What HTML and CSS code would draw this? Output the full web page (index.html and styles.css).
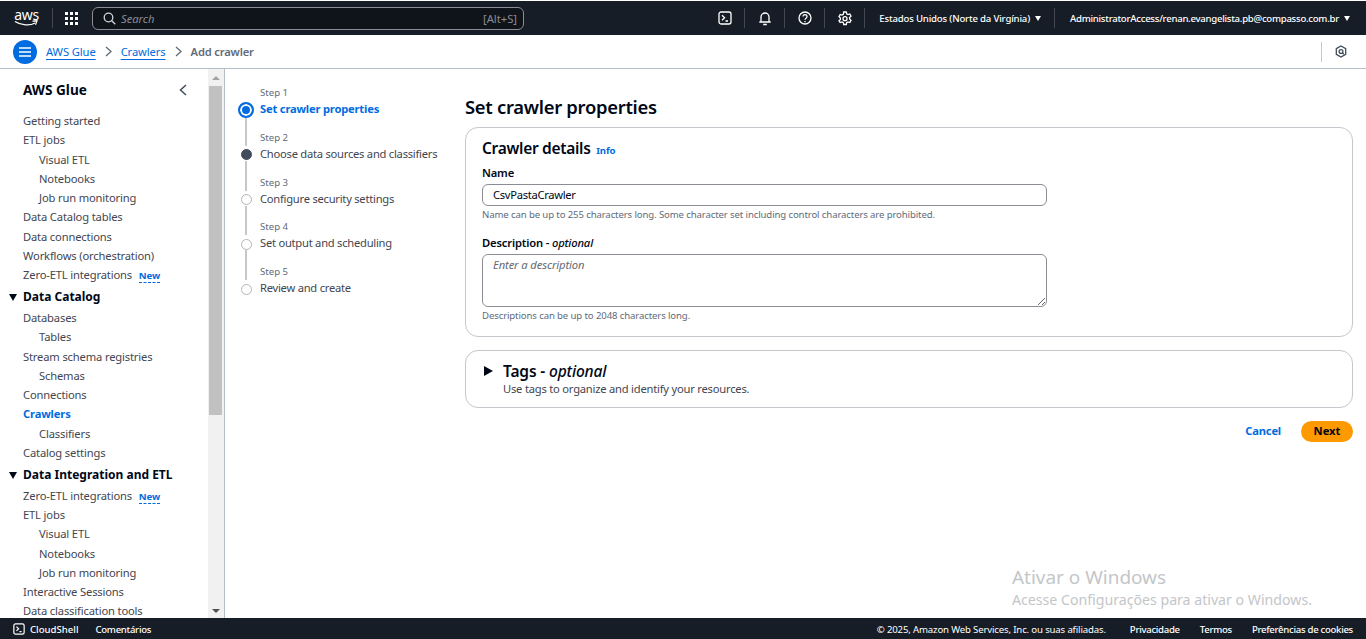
FILE: index.html
```html
<!DOCTYPE html>
<html lang="en">
<head>
	<title>Add crawler | AWS Glue</title>
	<meta charset="utf-8">
	<link rel="stylesheet" href="styles.css">
</head>
<body>
	<header class="topbar">
		<div class="logo">
			<span class="logo-text">aws</span>
			<svg class="logo-smile" width="25" height="7" viewBox="0 0 25 7"><path d="M1 1.500c6 4 15 4.500 20 1.500" fill="none" stroke="#fff" stroke-width="1.300"/><path d="M18.500 1.200l4.500-.4-1.500 4" fill="none" stroke="#fff" stroke-width="1.200"/></svg>
		</div>
		<span class="divider"></span>
		<svg class="apps" width="13" height="13" viewBox="0 0 13 13" fill="#fff"><rect width="3" height="3"/><rect x="5" width="3" height="3"/><rect x="10" width="3" height="3"/><rect y="5" width="3" height="3"/><rect x="5" y="5" width="3" height="3"/><rect x="10" y="5" width="3" height="3"/><rect y="10" width="3" height="3"/><rect x="5" y="10" width="3" height="3"/><rect x="10" y="10" width="3" height="3"/></svg>
		<div class="search">
			<svg width="13" height="13" viewBox="0 0 13 13" fill="none" stroke="#d1d5db" stroke-width="1.300"><circle cx="5.500" cy="5.500" r="4.300"/><path d="M8.700 8.700l3.600 3.600"/></svg>
			<span class="search-text">Search</span>
			<span class="search-key">[Alt+S]</span>
		</div>
		<div class="top-actions">
			<span class="top-icon">
				<svg width="14" height="14" viewBox="0 0 14 14" fill="none" stroke="#fff" stroke-width="1.300"><rect x="1" y="1" width="12" height="12" rx="2"/><path d="M4 4.200l2.600 2.500-2.600 2.500M7.500 10h2.500"/></svg>
			</span>
			<span class="divider"></span>
			<span class="top-icon">
				<svg width="14" height="15" viewBox="0 0 14 15" fill="none" stroke="#fff" stroke-width="1.300"><path d="M3 10.500V6a4 4 0 0 1 8 0v4.500M1.300 11h11.400M5.200 13.500h3.600"/></svg>
			</span>
			<span class="divider"></span>
			<span class="top-icon">
				<svg width="14" height="14" viewBox="0 0 14 14" fill="none" stroke="#fff" stroke-width="1.300"><circle cx="7" cy="7" r="6"/><path d="M5 5.500a2 2 0 1 1 3 1.800c-.7.400-1 .8-1 1.500"/><path d="M7 10v1.200"/></svg>
			</span>
			<span class="divider"></span>
			<span class="top-icon">
				<svg width="14" height="15" viewBox="0 0 14 15" fill="none" stroke="#fff" stroke-width="1.300"><path d="M5.700 1h2.600l.4 1.900 1.300.7 1.800-.6 1.200 2.200-1.400 1.300v1.500l1.400 1.300-1.200 2.200-1.800-.6-1.300.7-.4 1.900H5.700l-.4-1.900-1.300-.7-1.800.6L1 9.800l1.400-1.300V7L1 5.700 2.200 3.500l1.800.6 1.300-.7z"/><circle cx="7" cy="7.700" r="2"/></svg>
			</span>
			<span class="divider"></span>
			<span class="top-menu region">Estados Unidos (Norte da Virgínia)<i class="caret"></i></span>
			<span class="divider"></span>
			<span class="top-menu account">AdministratorAccess/renan.evangelista.pb@compasso.com.br<i class="caret"></i></span>
		</div>
	</header>

	<nav class="crumbs">
		<span class="menu-btn">
			<svg width="12" height="10" viewBox="0 0 12 10" fill="none" stroke="#fff" stroke-width="1.600"><path d="M0 1h12M0 5h12M0 9h12"/></svg>
		</span>
		<a class="crumb">AWS Glue</a>
		<svg class="chev" width="8" height="11" viewBox="0 0 8 11" fill="none" stroke="#5f6b7a" stroke-width="1.300"><path d="M1 1l5 4.500-5 4.500"/></svg>
		<a class="crumb">Crawlers</a>
		<svg class="chev" width="8" height="11" viewBox="0 0 8 11" fill="none" stroke="#5f6b7a" stroke-width="1.300"><path d="M1 1l5 4.500-5 4.500"/></svg>
		<span class="crumb-current">Add crawler</span>
		<div class="crumb-tools">
			<svg width="12" height="13" viewBox="0 0 12 13" fill="none" stroke="#414d5c" stroke-width="1.300"><path d="M6 1l4.700 2.700v5.600L6 12 1.300 9.300V3.700z"/><circle cx="6" cy="6.500" r="1.900"/><path d="M7.400 7.800l1.400 1.400"/></svg>
		</div>
	</nav>

	<div class="layout">
		<aside class="sidebar">
			<div class="side-head">
				<span class="side-title">AWS Glue</span>
				<svg width="8" height="12" viewBox="0 0 8 12" fill="none" stroke="#414d5c" stroke-width="1.500"><path d="M7 1L1.500 6 7 11"/></svg>
			</div>
			<ul class="side-list">
				<li>Getting started</li>
				<li>ETL jobs</li>
				<li class="sub">Visual ETL</li>
				<li class="sub">Notebooks</li>
				<li class="sub">Job run monitoring</li>
				<li>Data Catalog tables</li>
				<li>Data connections</li>
				<li>Workflows (orchestration)</li>
				<li>Zero-ETL integrations <span class="new">New</span></li>
				<li class="section"><i class="section-caret"></i>Data Catalog</li>
				<li>Databases</li>
				<li class="sub">Tables</li>
				<li>Stream schema registries</li>
				<li class="sub">Schemas</li>
				<li>Connections</li>
				<li class="active">Crawlers</li>
				<li class="sub">Classifiers</li>
				<li>Catalog settings</li>
				<li class="section"><i class="section-caret"></i>Data Integration and ETL</li>
				<li>Zero-ETL integrations <span class="new">New</span></li>
				<li>ETL jobs</li>
				<li class="sub">Visual ETL</li>
				<li class="sub">Notebooks</li>
				<li class="sub">Job run monitoring</li>
				<li>Interactive Sessions</li>
				<li>Data classification tools</li>
			</ul>
		</aside>
		<div class="scrollbar">
			<i class="arrow-up"></i>
			<div class="thumb"></div>
			<i class="arrow-down"></i>
		</div>

		<main class="main">
			<ol class="steps">
				<li class="step current">
					<span class="step-line none"></span><span class="step-num">Step 1</span>
					<span class="dot"></span><span class="step-name">Set crawler properties</span>
				</li>
				<li class="step next">
					<span class="step-line"></span><span class="step-num">Step 2</span>
					<span class="dot"></span><span class="step-name">Choose data sources and classifiers</span>
				</li>
				<li class="step">
					<span class="step-line"></span><span class="step-num">Step 3</span>
					<span class="dot"></span><span class="step-name">Configure security settings</span>
				</li>
				<li class="step">
					<span class="step-line"></span><span class="step-num">Step 4</span>
					<span class="dot"></span><span class="step-name">Set output and scheduling</span>
				</li>
				<li class="step">
					<span class="step-line"></span><span class="step-num">Step 5</span>
					<span class="dot"></span><span class="step-name">Review and create</span>
				</li>
			</ol>

			<section class="form">
				<h1>Set crawler properties</h1>
				<div class="panel details">
					<h2>Crawler details <a class="info">Info</a></h2>
					<label class="field-label">Name</label>
					<input class="input" type="text" value="CsvPastaCrawler">
					<p class="hint">Name can be up to 255 characters long. Some character set including control characters are prohibited.</p>
					<label class="field-label second">Description - <em>optional</em></label>
					<textarea class="input area" placeholder="Enter a description"></textarea>
					<p class="hint">Descriptions can be up to 2048 characters long.</p>
				</div>
				<div class="panel tags">
					<i class="tags-caret"></i>
					<div>
						<h2>Tags - <em>optional</em></h2>
						<p class="tags-sub">Use tags to organize and identify your resources.</p>
					</div>
				</div>
				<div class="actions">
					<a class="cancel">Cancel</a>
					<a class="next-btn">Next</a>
				</div>
			</section>
		</main>
	</div>

	<footer class="footer">
		<svg width="12" height="12" viewBox="0 0 14 14" fill="none" stroke="#fff" stroke-width="1.400"><rect x="1" y="1" width="12" height="12" rx="2"/><path d="M4 4.200l2.600 2.500-2.600 2.500M7.500 10h2.500"/></svg>
		<span class="cloudshell">CloudShell</span>
		<span class="feedback">Comentários</span>
		<div class="footer-right">
			<span class="copy">© 2025, Amazon Web Services, Inc. ou suas afiliadas.</span>
			<span class="foot-link first">Privacidade</span>
			<span class="foot-link">Termos</span>
			<span class="foot-link">Preferências de cookies</span>
		</div>
	</footer>

	<div class="watermark">
		<div class="wm-title">Ativar o Windows</div>
		<div class="wm-sub">Acesse Configurações para ativar o Windows.</div>
	</div>
</body>
</html>
```

FILE: styles.css
```css
* {
	box-sizing: border-box;
}

html, body {
	height: 100%;
}

body {
	margin: 0;
	overflow: hidden;
	display: flex;
	flex-direction: column;
	font-family: "Noto Sans", "Open Sans", sans-serif;
	font-size: 11.2px;
	color: #000716;
	background: #fff;
}

ul, ol {
	list-style: none;
	margin: 0;
	padding: 0;
}

/* top bar */
.topbar {
	height: 34px;
	margin-top: 1px;
	flex: none;
	display: flex;
	align-items: center;
	padding: 0 16px 0 14px;
	background: #161d26;
	color: #fff;
}

.logo {
	width: 25px;
	display: flex;
	flex-direction: column;
	align-items: center;
}

.logo-text {
	font-size: 14px;
	line-height: 11px;
	height: 11px;
	letter-spacing: -0.3px;
}

.logo-smile {
	display: block;
}

.divider {
	width: 1px;
	height: 20px;
	background: #424650;
	flex: none;
}

.topbar > .divider {
	margin: 0 12px 0 13px;
}

.search {
	width: 432px;
	height: 23px;
	margin-left: 14px;
	display: flex;
	align-items: center;
	padding: 0 6px 0 10px;
	border: 1px solid #8c8c94;
	border-radius: 6px;
	background: #0f141a;
}

.search-text {
	margin-left: 5px;
	font-style: italic;
	color: #8c8c94;
}

.search-key {
	margin-left: auto;
	font-size: 11.2px;
	color: #8c8c94;
}

.top-actions {
	margin-left: auto;
	display: flex;
	align-items: center;
}

.top-icon {
	width: 39px;
	display: flex;
	justify-content: center;
}

.top-menu {
	font-size: 9.6px;
	font-weight: 500;
	white-space: nowrap;
}

.region {
	padding: 0 13px 0 14px;
	letter-spacing: -0.18px;
}

.account {
	padding-left: 15px;
	letter-spacing: -0.27px;
}

.caret {
	display: inline-block;
	margin-left: 5px;
	border-style: solid;
	border-width: 5px 3px 0;
	border-color: #fff transparent transparent;
	vertical-align: 1px;
}

/* breadcrumbs */
.crumbs {
	height: 34px;
	flex: none;
	display: flex;
	align-items: center;
	padding: 0 19px 0 13px;
	border-bottom: 1px solid #b6bec9;
	font-weight: 500;
}

.menu-btn {
	width: 24px;
	height: 24px;
	margin-right: 9px;
	border-radius: 50%;
	background: #006ce0;
	display: flex;
	align-items: center;
	justify-content: center;
}

.crumb {
	color: #006ce0;
	text-decoration: underline;
	text-underline-offset: 3px;
	font-weight: 400;
	letter-spacing: -0.1px;
}

.chev {
	margin: 0 8px 0 9px;
}

.crumb-current {
	color: #5f6b7a;
	font-weight: 600;
	letter-spacing: -0.17px;
}

.crumb-tools {
	margin-left: auto;
	height: 20px;
	padding-left: 13px;
	border-left: 1px solid #c6c6cd;
	display: flex;
	align-items: center;
}

/* sidebar */
.layout {
	flex: 1;
	min-height: 0;
	display: flex;
}

.sidebar {
	width: 208px;
	flex: none;
	overflow: hidden;
	padding: 0 23px;
}

.side-head {
	height: 42px;
	display: flex;
	align-items: center;
	justify-content: space-between;
	padding: 0 1px 0 0;
	margin-right: -3px;
}

.side-title {
	margin-top: -2px;
	font-size: 13.6px;
	font-weight: 700;
}

.side-list li {
	height: 19.25px;
	line-height: 19.25px;
	color: #424650;
	white-space: nowrap;
	letter-spacing: -0.16px;
}

.side-list .sub {
	padding-left: 16px;
}

.side-list .active {
	color: #006ce0;
	font-weight: 700;
}

.side-list .section {
	height: 23.75px;
	line-height: 25.5px;
	font-size: 12px;
	font-weight: 700;
	color: #000716;
	position: relative;
	letter-spacing: 0;
}

.section-caret {
	position: absolute;
	left: -14px;
	top: 10px;
	border-style: solid;
	border-width: 7px 4.500px 0;
	border-color: #000716 transparent transparent;
}

.new {
	margin-left: 4px;
	font-size: 9.6px;
	font-weight: 700;
	color: #006ce0;
	border-bottom: 1px dashed #006ce0;
	letter-spacing: -0.1px;
}

.scrollbar {
	width: 17px;
	flex: none;
	display: flex;
	flex-direction: column;
	align-items: center;
	background: #f1f1f1;
	border-right: 1px solid #b6bec9;
	padding: 7px 1px 5px 0;
}

.arrow-up {
	border-style: solid;
	border-width: 0 4px 4px;
	border-color: transparent transparent #a3a3a3;
}

.thumb {
	width: 13px;
	height: 329px;
	margin-top: 6px;
	background: #c1c1c1;
}

.arrow-down {
	margin-top: auto;
	border-style: solid;
	border-width: 4px 4px 0;
	border-color: #505050 transparent transparent;
}

/* wizard steps */
.main {
	flex: 1;
	min-width: 0;
	display: flex;
	padding: 0 13px 0 13px;
}

.steps {
	width: 227px;
	flex: none;
	padding-top: 15px;
}

.step {
	display: grid;
	grid-template-columns: 16px 1fr;
	grid-template-rows: 28.8px 16px;
	column-gap: 6px;
	align-items: end;
	color: #424650;
}

.step-num {
	font-size: 9.6px;
	line-height: 17px;
	color: #5f6b7a;
}

.step-name {
	line-height: 17px;
	white-space: nowrap;
	letter-spacing: -0.25px;
}

.step:first-child {
	grid-template-rows: 17px 16px;
}

.step-line {
	justify-self: center;
	align-self: stretch;
	width: 2px;
	background: #c6c6cd;
	margin-top: -1px;
	margin-bottom: 0;
}

.step-line.none {
	background: none;
}

.dot {
	justify-self: center;
	align-self: center;
	margin-top: 2px;
	width: 11px;
	height: 11px;
	border-radius: 50%;
	border: 1.500px solid #b4b4bb;
	background: #fff;
	position: relative;
}

.current .dot {
	width: 16px;
	height: 16px;
	border: 2px solid #006ce0;
	box-shadow: inset 0 0 0 2px #fff;
	background: #006ce0;
}

.current .step-name {
	color: #006ce0;
	font-weight: 700;
	letter-spacing: -0.2px;
}

.next .dot {
	background: #414d5c;
	border-color: #414d5c;
}

/* form */
.form {
	flex: 1;
	min-width: 0;
}

h1 {
	margin: 0;
	height: 58px;
	line-height: 24px;
	padding-top: 26px;
	font-size: 18.4px;
	font-weight: 600;
	letter-spacing: -0.28px;
}

.panel {
	border: 1px solid #c6c6cd;
	border-radius: 13px;
}

h2 {
	margin: 0;
	font-size: 15.500px;
	line-height: 20px;
	font-weight: 600;
	letter-spacing: -0.15px;
}

h2 em {
	font-weight: 500;
}

.details {
	height: 210px;
	padding: 10px 16px 0;
}

.details h2 {
	letter-spacing: -0.3px;
}

.info {
	margin-left: 2px;
	font-size: 9.6px;
	font-weight: 700;
	color: #006ce0;
	letter-spacing: -0.1px;
}

.field-label {
	display: block;
	margin-top: 5px;
	line-height: 14px;
	font-weight: 600;
	letter-spacing: -0.15px;
}

.field-label em {
	font-weight: 500;
}

.field-label.second {
	margin-top: 15px;
}

.input {
	display: block;
	width: 565px;
	height: 22px;
	margin-top: 4px;
	padding: 0 10px 2px;
	border: 1px solid #8c8c94;
	border-radius: 6px;
	font: 11.2px "Noto Sans", "Open Sans", sans-serif;
	letter-spacing: -0.3px;
	color: #000716;
	background: #fff;
	outline: none;
}

.area {
	height: 53px;
	padding: 2px 10px;
	resize: both;
	letter-spacing: -0.1px;
}

.area::placeholder {
	font-style: italic;
	color: #656871;
}

.hint {
	margin: 2px 0 0;
	font-size: 9.6px;
	line-height: 13px;
	color: #5f6b7a;
	letter-spacing: -0.12px;
}

.tags {
	height: 58px;
	margin-top: 13px;
	padding: 10px 18px 0;
	display: flex;
	align-items: flex-start;
	gap: 10px;
}

.tags-caret {
	margin-top: 5px;
	border-style: solid;
	border-width: 5px 0 5px 9px;
	border-color: transparent transparent transparent #000716;
}

.tags-sub {
	margin: 0;
	line-height: 15px;
	color: #424650;
	letter-spacing: -0.22px;
}

.actions {
	margin-top: 13px;
	display: flex;
	justify-content: flex-end;
	align-items: center;
	gap: 20px;
	font-weight: 700;
}

.cancel {
	margin-bottom: 2px;
	color: #006ce0;
	letter-spacing: -0.2px;
}

.next-btn {
	width: 52px;
	height: 21px;
	line-height: 20px;
	text-align: center;
	border-radius: 11px;
	background: #ff9900;
	color: #000716;
}

/* footer */
.footer {
	height: 21px;
	flex: none;
	display: flex;
	align-items: center;
	padding: 1px 13px 0;
	background: #161d26;
	color: #fff;
	font-size: 9.6px;
	font-weight: 500;
}

.cloudshell {
	margin: 0 17px 0 5px;
}

.feedback {
	letter-spacing: -0.3px;
}

.footer-right {
	margin-left: auto;
	display: flex;
	gap: 20px;
}

.foot-link {
	letter-spacing: -0.3px;
}

.foot-link.first {
	margin-left: 4px;
}

.copy {
	font-weight: 400;
	letter-spacing: -0.15px;
}

/* windows activation notice lies over the page */
.watermark {
	position: absolute;
	left: 1012px;
	top: 565px;
	color: #c3c6c9;
	pointer-events: none;
}

.wm-title {
	font-size: 18.950px;
	line-height: 24px;
}

.wm-sub {
	font-size: 14.150px;
	line-height: 22px;
}
```
